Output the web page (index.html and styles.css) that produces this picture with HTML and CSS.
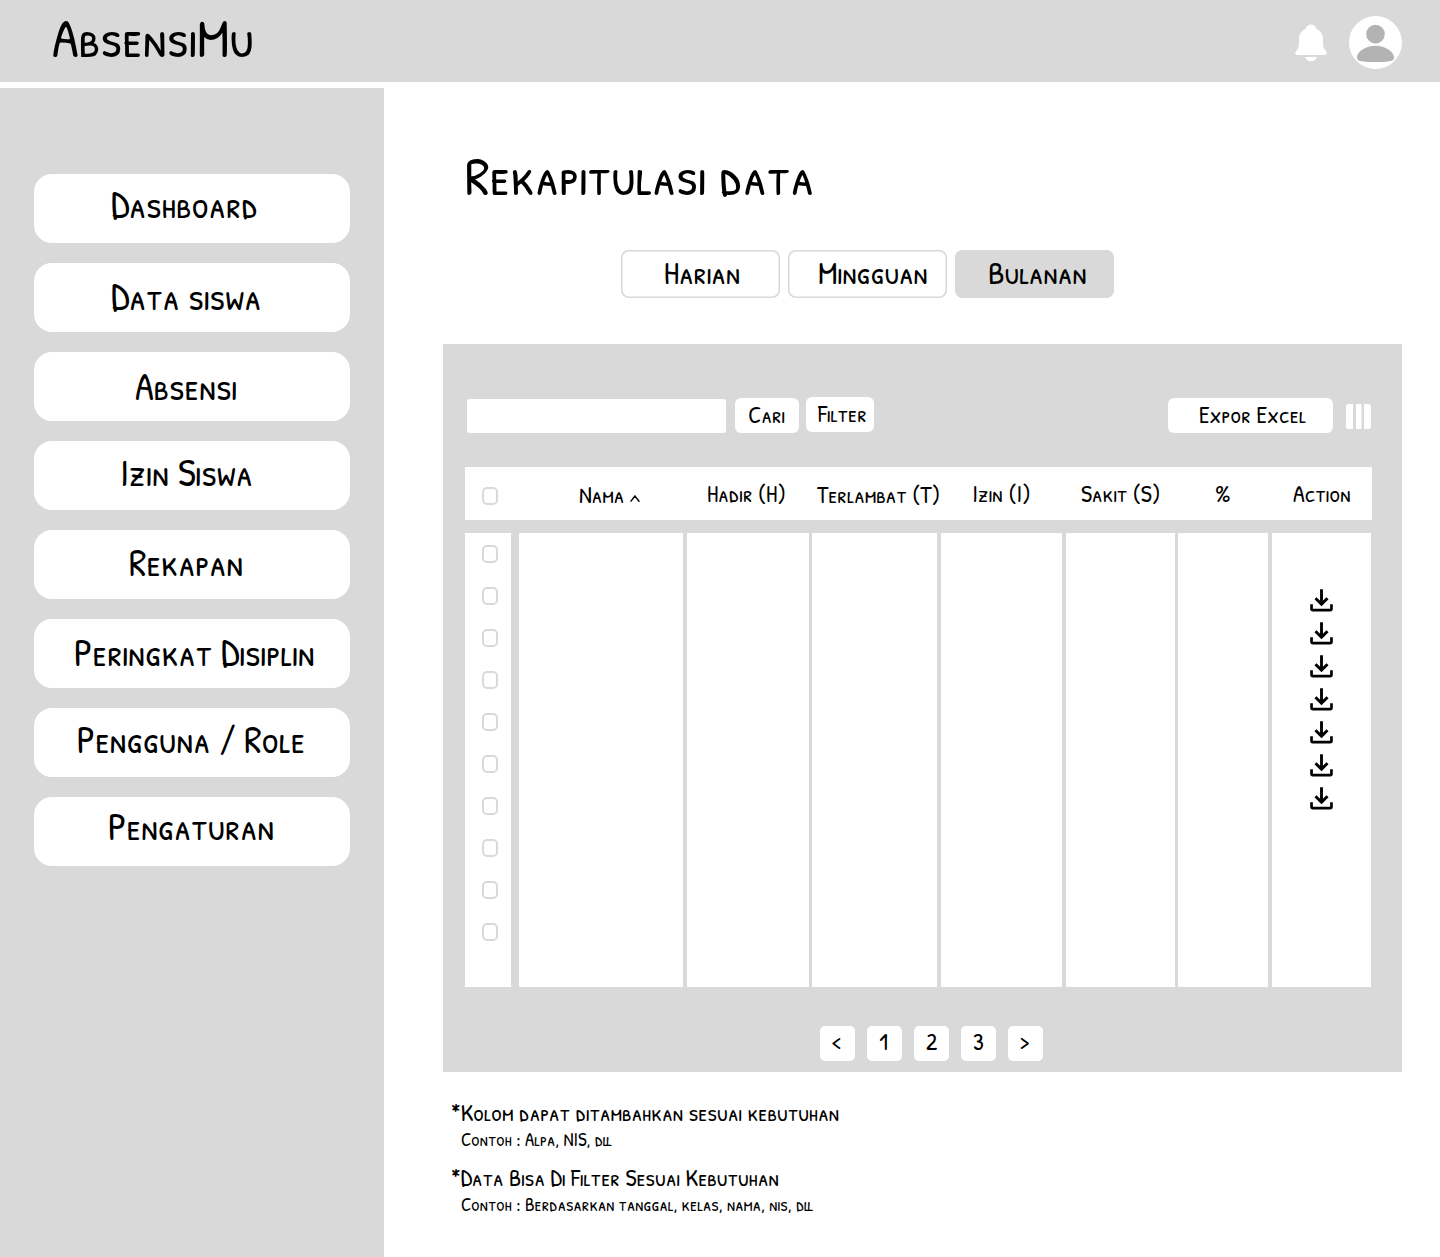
FILE: index.html
```html
<!DOCTYPE html>
<html lang="id">
<head>
<meta charset="utf-8">
<title>AbsensiMu</title>
<link rel="stylesheet" href="styles.css">
</head>
<body>
<svg class="sprite" aria-hidden="true">
  <symbol id="download" viewBox="0 0 24 24"><path d="M12 .3V15.500M5.700 9.600L12 15.800L18.300 9.600" stroke-width="3"/><path d="M1.600 16V20.600Q1.600 22 3 22H21Q22.400 22 22.400 20.600V16" stroke-width="2.800"/></symbol>
</svg>
<header class="topbar">
  <h1 class="label logo">AbsensiMu</h1>
  <div class="topbar-icons">
    <svg class="bell" viewBox="0 0 32 38"><path d="M16 .5C18.600 .5 20.800 2.300 21.200 4.700C25.200 6.500 28 10.200 28 14.700V19C28 23.300 29 25.200 31 27.300C32.600 29 31.700 31 29.600 31H2.400C.3 31-.6 29 1 27.300C3 25.200 4 23.300 4 19V14.700C4 10.200 6.800 6.500 10.800 4.700C11.200 2.300 13.400 .5 16 .5Z"/><path d="M10 33H22C21.200 35.600 19 37.300 16 37.300C13 37.300 10.800 35.600 10 33Z"/></svg>
    <svg class="avatar" viewBox="0 0 53 53"><circle cx="26.500" cy="26.500" r="26.500" fill="#fff"/><circle cx="26.500" cy="18.100" r="9.300" fill="#b3b3b3"/><path d="M26.500 29.800C36.500 29.800 45 35.600 45 41.500C45 43.500 44.200 44.500 42 44.900C37.500 45.800 32 46.100 26.500 46.100C21 46.100 15.500 45.800 11 44.900C8.800 44.500 8 43.500 8 41.500C8 35.600 16.500 29.800 26.500 29.800Z" fill="#b3b3b3"/></svg>
  </div>
</header>
<div class="layout">
  <nav class="sidebar">
    <a class="nav-item"><span class="label nav-dashboard">Dashboard</span></a>
    <a class="nav-item"><span class="label nav-data">Data siswa</span></a>
    <a class="nav-item"><span class="label nav-absensi">Absensi</span></a>
    <a class="nav-item"><span class="label nav-izin">Izin Siswa</span></a>
    <a class="nav-item"><span class="label nav-rekapan">Rekapan</span></a>
    <a class="nav-item"><span class="label nav-peringkat">Peringkat Disiplin</span></a>
    <a class="nav-item"><span class="label nav-pengguna">Pengguna / Role</span></a>
    <a class="nav-item"><span class="label nav-pengaturan">Pengaturan</span></a>
  </nav>
  <main class="content">
    <h2 class="label title">Rekapitulasi data</h2>
    <div class="tabs">
      <div class="tab"><span class="label tab-harian">Harian</span></div>
      <div class="tab"><span class="label tab-mingguan">Mingguan</span></div>
      <div class="tab active"><span class="label tab-bulanan">Bulanan</span></div>
    </div>
    <section class="panel">
      <div class="toolbar">
        <div class="search"></div>
        <div class="btn btn-cari"><span class="label">Cari</span></div>
        <div class="btn btn-filter"><span class="label">Filter</span></div>
        <div class="btn btn-export"><span class="label">Expor Excel</span></div>
        <svg class="columns-icon" viewBox="0 0 25 25"><path d="M2.500 0H7V25H2.500Q0 25 0 22.500V2.500Q0 0 2.500 0ZM10 0H15.500V25H10ZM18 0H22.500Q25 0 25 2.500V22.500Q25 25 22.500 25H18Z"/></svg>
      </div>
      <div class="grid table-head">
        <div class="check-cell"><i class="check"></i></div>
        <div class="cell-nama"><span class="label">Nama</span><svg class="sort" viewBox="0 0 10 7"><path d="M1 6.200L4.900 1L9 6.200"/></svg></div>
        <div class="cell-hadir"><span class="label">Hadir (H)</span></div>
        <div class="cell-terlambat"><span class="label">Terlambat (T)</span></div>
        <div class="cell-izin"><span class="label">Izin (I)</span></div>
        <div class="cell-sakit"><span class="label">Sakit (S)</span></div>
        <div class="cell-persen"><span class="label">%</span></div>
        <div class="cell-action"><span class="label">Action</span></div>
      </div>
      <div class="grid table-body">
        <div class="col checks"><i class="check"></i><i class="check"></i><i class="check"></i><i class="check"></i><i class="check"></i><i class="check"></i><i class="check"></i><i class="check"></i><i class="check"></i><i class="check"></i></div>
        <div class="col"></div>
        <div class="col narrow-gap"></div>
        <div class="col"></div>
        <div class="col"></div>
        <div class="col narrow-gap"></div>
        <div class="col"></div>
        <div class="col actions">
          <svg class="dl"><use href="#download"/></svg>
          <svg class="dl"><use href="#download"/></svg>
          <svg class="dl"><use href="#download"/></svg>
          <svg class="dl"><use href="#download"/></svg>
          <svg class="dl"><use href="#download"/></svg>
          <svg class="dl"><use href="#download"/></svg>
          <svg class="dl"><use href="#download"/></svg>
        </div>
      </div>
      <div class="pagination">
        <div class="page arrow"><span class="label">&lt;</span></div>
        <div class="page first"><span class="label">1</span></div>
        <div class="page"><span class="label">2</span></div>
        <div class="page"><span class="label">3</span></div>
        <div class="page arrow"><span class="label">&gt;</span></div>
      </div>
    </section>
    <div class="notes">
      <div class="note"><span class="label">*Kolom dapat ditambahkan sesuai kebutuhan</span></div>
      <div class="example"><span class="label">Contoh : Alpa, NIS, dll</span></div>
      <div class="note"><span class="label">*Data Bisa Di Filter Sesuai Kebutuhan</span></div>
      <div class="example"><span class="label">Contoh : Berdasarkan tanggal, kelas, nama, nis, dll</span></div>
    </div>
  </main>
</div>
</body>
</html>
```
FILE: styles.css
```css
* { box-sizing: border-box; }

body {
  margin: 0;
  background: #fff;
  color: #000;
  font-family: "Patrick Hand SC", Lato, sans-serif;
}

.sprite { display: none; }

/* --x: left inset, --b: baseline within the parent */
.label {
  display: block;
  width: max-content;
  margin: calc(var(--b) - .865em) 0 0 var(--x, 0px);
  font-weight: 400;
  line-height: 1;
  white-space: nowrap;
}

.topbar {
  display: flex;
  justify-content: space-between;
  height: 82px;
  padding-right: 38px;
  background: #d9d9d9;
}
.logo { font-size: 54.6px; --x: 52px; --b: 57px; }
.topbar-icons { display: flex; gap: 22px; }
.bell { width: 32px; height: 38px; margin-top: 24px; fill: #fff; }
.avatar { width: 53px; height: 53px; margin-top: 16px; }

.layout { display: flex; height: 1169px; margin-top: 6px; }

.sidebar {
  display: flex;
  flex-direction: column;
  gap: 20px;
  width: 384px;
  padding: 86px 34px 0;
  background: #d9d9d9;
}
.nav-item {
  display: flex;
  align-items: flex-start;
  height: 69px;
  border-radius: 18px;
  background: #fff;
  font-size: 38.5px;
}
.nav-dashboard { --x: 77px; --b: 44px; }
.nav-data { --x: 77px; --b: 47px; }
.nav-absensi { --x: 101px; --b: 48px; }
.nav-izin { --x: 86px; --b: 45px; }
.nav-rekapan { --x: 95px; --b: 46px; }
.nav-peringkat { --x: 40px; --b: 47px; }
.nav-pengguna { --x: 42.7px; --b: 45px; }
.nav-pengaturan { --x: 74px; --b: 43px; }

.content { display: flex; flex-direction: column; width: 1056px; padding: 0 38px 0 59px; }
.title { height: 55px; font-size: 54.7px; --x: 22px; --b: 107px; }

.tabs { display: flex; gap: 8px; margin: 47.3px 0 46px 178px; }
.tab {
  display: flex;
  align-items: flex-start;
  width: 159px;
  height: 48px;
  border-radius: 8px;
  box-shadow: inset 0 0 0 1.5px #d9d9d9;
  font-size: 32.8px;
}
.tab.active { background: #d9d9d9; }
.tab-harian { --x: 42.8px; --b: 34.6px; }
.tab-mingguan { --x: 30px; --b: 34.6px; }
.tab-bulanan { --x: 32.9px; --b: 34.6px; }

.panel {
  height: 728px;
  padding: 53px 30px 0 22px;
  background: #d9d9d9;
  font-size: 24px;
}
.toolbar { display: flex; align-items: flex-start; height: 70px; padding-left: 2px; }
.search { width: 259px; height: 34px; margin: 2px 9px 0 0; border-radius: 3px; background: #fff; }
.btn { display: flex; align-items: flex-start; height: 35px; margin-top: 1px; border-radius: 6px; background: #fff; --b: 25px; }
.btn-cari { width: 64px; margin-right: 7px; --x: 13.3px; }
.btn-filter { width: 68px; margin-top: 0; --x: 12px; }
.btn-export { width: 165px; margin-left: auto; --x: 31px; }
.columns-icon { width: 25px; height: 25px; margin: 7px 1px 0 13px; fill: #fff; }

.grid { display: grid; width: 907px; grid-template-columns: 54px 168px 125px 129px 125px 112px 94px 1fr; }
.table-head { height: 53px; background: #fff; }
.table-head > div { display: flex; align-items: flex-start; --b: 35px; }
.check { display: block; width: 16px; height: 18px; border: 2px solid #d9d9d9; border-radius: 5px; }
.table-head .check-cell { padding: 20px 0 0 17px; }
.table-head .cell-nama { --x: 60px; --b: 36px; }
.sort { width: 10px; height: 7px; margin: 28px 0 0 6px; fill: none; stroke: #000; stroke-width: 1.4; stroke-linecap: round; }
.cell-hadir { --x: 20px; }
.table-head .cell-terlambat { --x: 5px; --b: 36px; }
.cell-izin { --x: 31.3px; }
.cell-sakit { --x: 15px; }
.cell-persen { --x: 37px; }
.cell-action { --x: 21px; }

.table-body { height: 454px; margin-top: 13px; }
.col { margin-right: 4px; background: #fff; }
.col.narrow-gap { margin-right: 3px; }
.checks { display: flex; flex-direction: column; gap: 24px; margin-right: 8px; padding: 12px 0 0 17px; }
.actions { display: flex; flex-direction: column; align-items: center; gap: 10px; margin-right: 1px; padding-top: 56px; }
.dl { width: 23px; height: 23px; fill: none; stroke: #000; }

.pagination { display: flex; gap: 12px; margin: 39px 0 0 355px; }
.page { display: flex; align-items: flex-start; justify-content: center; width: 35px; height: 35px; border-radius: 5px; background: #fff; --b: 24px; }
.page.arrow { padding-right: 2px; --b: 23px; }
.page.first { padding-right: 2px; }

.notes { display: flex; flex-direction: column; padding-left: 8px; font-size: 24px; }
.note { display: flex; align-items: flex-start; height: 38px; margin-top: 27px; --b: 22px; }
.example { display: flex; align-items: flex-start; height: 0; font-size: 18.9px; --x: 10px; --b: 9px; }
```
